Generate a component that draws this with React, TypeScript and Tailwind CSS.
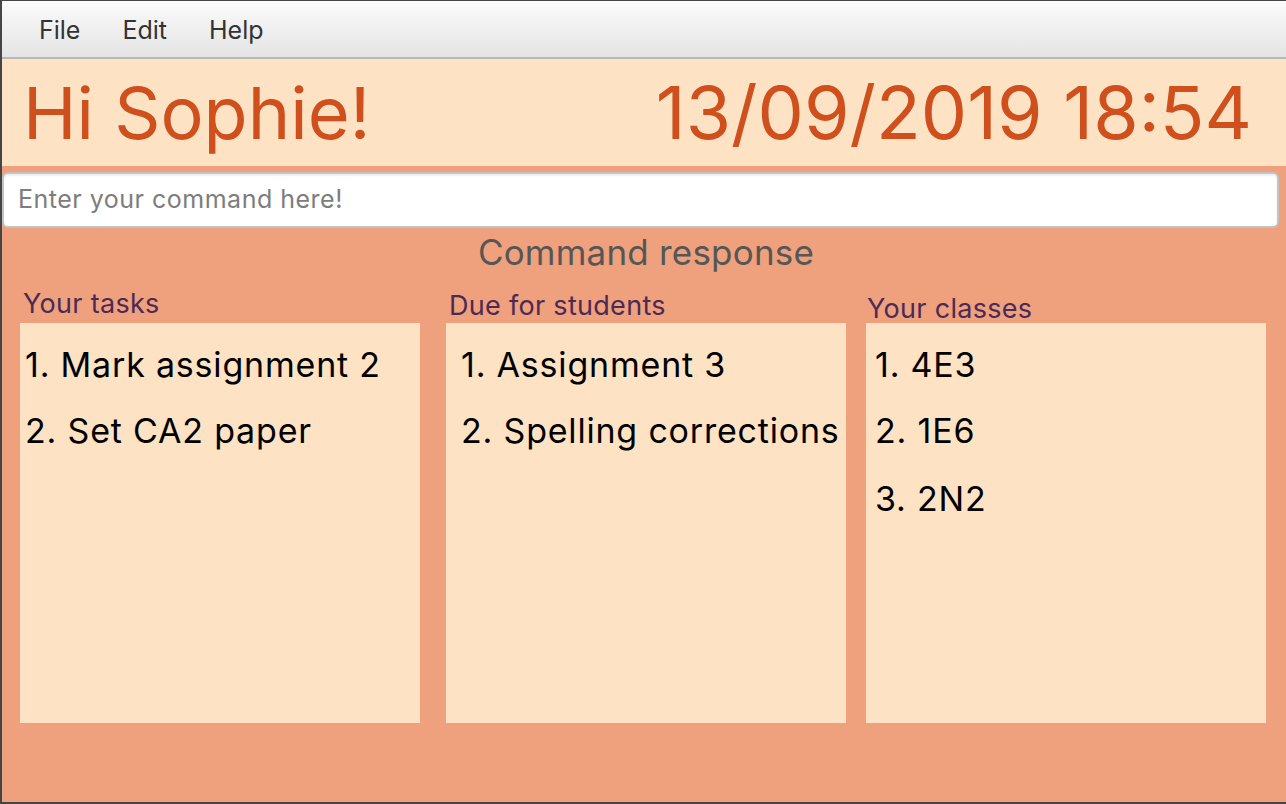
import React from 'react';

const font = { fontFamily: 'Inter, Roboto, "Liberation Sans", sans-serif' };

const columns = [
  { title: 'Your tasks', titleClass: 'pl-[3px] pt-[18px]', pad: 'pl-[5px]', items: ['Mark assignment 2', 'Set CA2 paper'] },
  { title: 'Due for students', titleClass: 'pl-[3px] pt-[20px]', pad: 'pl-[15px]', items: ['Assignment 3', 'Spelling corrections'] },
  { title: 'Your classes', titleClass: 'pl-[1px] pt-[23px]', pad: 'pl-[9px]', items: ['4E3', '1E6', '2N2'] },
];

const App: React.FC = () => {
  return (
    <div
      className="w-[1286px] h-[804px] flex flex-col bg-[#efa07d] border-l-2 border-t border-b-2 border-[#454545] overflow-hidden"
      style={font}
    >
      {/* menu bar */}
      <div className="h-[58px] shrink-0 flex items-center gap-[42px] pl-[37px] pt-[4px] bg-gradient-to-b from-[#fbfbfb] to-[#e4e4e4] border-b-2 border-[#b7b7b7] text-[25px] text-[#333]">
        <span>File</span>
        <span>Edit</span>
        <span>Help</span>
      </div>

      {/* greeting header */}
      <div className="h-[107px] shrink-0 flex items-center justify-between pl-[21px] pr-[34px] bg-[#fde3c3] text-[#cf4f1d] leading-none">
        <span className="text-[72px]">Hi Sophie!</span>
        <span className="text-[73.5px]">13/09/2019 18:54</span>
      </div>

      {/* command box */}
      <div className="pt-[6px] pr-[7px]">
        <div className="h-[56px] flex items-center px-[14px] bg-white rounded-[6px] border-2 border-[#c3c3c3] shadow-[inset_0_2px_2px_rgba(0,0,0,0.06)] text-[25px] tracking-[0.5px] text-[#7d7d7d]">
          Enter your command here!
        </div>
      </div>

      <div className="text-center text-[35px] tracking-[0.2px] text-[#565656] pt-[4px] leading-[40px] pl-[4px]">Command response</div>

      {/* lists */}
      <div className="flex pl-[18px] gap-[26px]">
        {columns.map((col, i) => (
          <div key={col.title} className={i === 2 ? '-ml-[6px]' : ''}>
            <div className={`h-[51px] ${col.titleClass} text-[27px] tracking-[0.3px] leading-[28px] text-[#4b2a55]`}>{col.title}</div>
            <div className={`w-[400px] h-[400px] bg-[#fde3c3] ${col.pad} pt-[20px] text-[34px] tracking-[0.8px] text-black whitespace-nowrap`}>
              {col.items.map((it, j) => (
                <div key={it} className={j === 2 ? 'mt-[2px] h-[66px] leading-[44px]' : 'h-[66px] leading-[44px]'}>
                  {j + 1}. {it}
                </div>
              ))}
            </div>
          </div>
        ))}
      </div>
    </div>
  );
};

export default App;
